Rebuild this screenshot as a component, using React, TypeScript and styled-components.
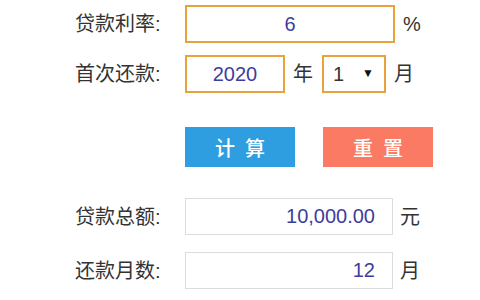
import { FC } from "react";
import styled, { createGlobalStyle } from "styled-components";

const GlobalStyle = createGlobalStyle`
  body {
    margin: 0;
    background: #ffffff;
    font-family: "Liberation Sans", "Noto Sans CJK SC", sans-serif;
  }
`;

const Form = styled.div`
  display: flex;
  flex-direction: column;
  padding: 5px 0 0 75px;
  width: 480px;
  height: 300px;
  box-sizing: border-box;
`;

const Row = styled.div<{ $gap: number; $height: number }>`
  display: flex;
  align-items: center;
  height: ${(p) => p.$height}px;
  margin-bottom: ${(p) => p.$gap}px;
`;

const Label = styled.label`
  width: 110px;
  flex-shrink: 0;
  font-size: 20px;
  color: #333333;
  line-height: 1;
`;

const Input = styled.input<{ $width: number; $active?: boolean; $align?: string }>`
  box-sizing: border-box;
  width: ${(p) => p.$width}px;
  height: 100%;
  padding: 0 ${(p) => (p.$align === "right" ? "17px" : "0")} 0 0;
  border: ${(p) => (p.$active ? "2px solid #e8a33f" : "1px solid #dcdcdc")};
  border-radius: 0;
  outline: none;
  background: #ffffff;
  font-family: "Liberation Sans", sans-serif;
  font-size: 20px;
  color: #3d3d9c;
  text-align: ${(p) => p.$align || "center"};
`;

const Unit = styled.span<{ $left?: number }>`
  margin-left: ${(p) => p.$left ?? 8}px;
  font-size: 20px;
  color: #333333;
  line-height: 1;
`;

const SelectBox = styled.div`
  position: relative;
  margin-left: 9px;
  width: 64px;
  height: 100%;
`;

const Select = styled.select`
  appearance: none;
  box-sizing: border-box;
  width: 100%;
  height: 100%;
  padding: 0 0 0 9px;
  border: 2px solid #e8a33f;
  border-radius: 0;
  outline: none;
  background: #ffffff;
  font-family: "Liberation Sans", sans-serif;
  font-size: 20px;
  color: #333333;
`;

const Arrow = styled.span`
  position: absolute;
  right: 12px;
  top: 50%;
  transform: translateY(-55%);
  font-size: 12px;
  color: #111111;
  pointer-events: none;
`;

const Buttons = styled.div`
  display: flex;
  gap: 28px;
  margin: 0 0 31px 110px;
`;

const Button = styled.button<{ $color: string }>`
  width: 110px;
  height: 40px;
  border: none;
  border-radius: 0;
  background: ${(p) => p.$color};
  color: #ffffff;
  font-family: "Noto Sans CJK SC", sans-serif;
  font-size: 20px;
  font-weight: 500;
  letter-spacing: 10px;
  padding: 0 0 0 10px;
  cursor: pointer;
`;

const App: FC = () => {
  return (
    <>
      <GlobalStyle />
      <Form>
        <Row $height={38} $gap={12}>
          <Label>贷款利率:</Label>
          <Input $width={210} $active defaultValue="6" />
          <Unit>%</Unit>
        </Row>
        <Row $height={38} $gap={34}>
          <Label>首次还款:</Label>
          <Input $width={100} $active defaultValue="2020" />
          <Unit>年</Unit>
          <SelectBox>
            <Select defaultValue="1">
              {Array.from({ length: 12 }, (_, i) => (
                <option key={i} value={i + 1}>
                  {i + 1}
                </option>
              ))}
            </Select>
            <Arrow>▼</Arrow>
          </SelectBox>
          <Unit>月</Unit>
        </Row>
        <Buttons>
          <Button $color="#2e9ee0">计算</Button>
          <Button $color="#fa7a63">重置</Button>
        </Buttons>
        <Row $height={37} $gap={17}>
          <Label>贷款总额:</Label>
          <Input $width={208} $align="right" defaultValue="10,000.00" />
          <Unit $left={7}>元</Unit>
        </Row>
        <Row $height={37} $gap={0}>
          <Label>还款月数:</Label>
          <Input $width={208} $align="right" defaultValue="12" />
          <Unit $left={7}>月</Unit>
        </Row>
      </Form>
    </>
  );
};

export default App;
